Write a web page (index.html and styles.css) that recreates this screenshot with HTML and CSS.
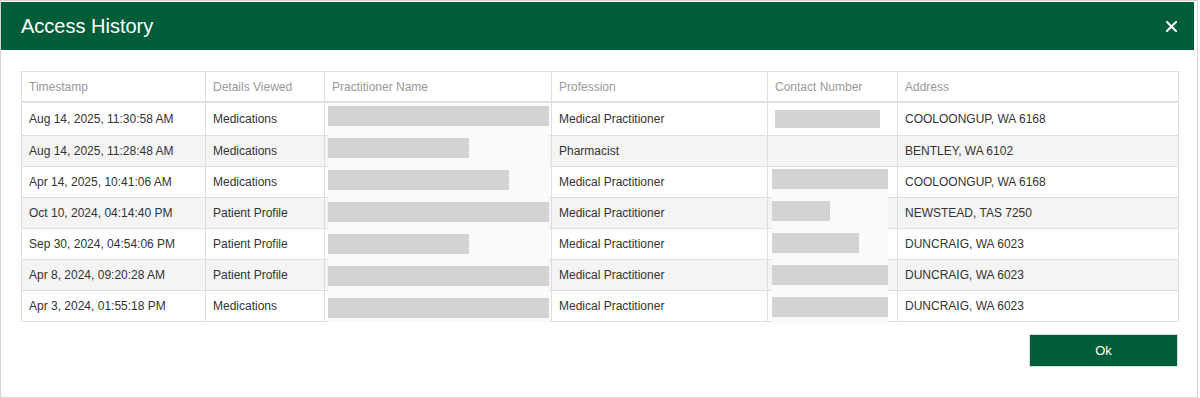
FILE: index.html
```html
<!DOCTYPE html>
<html lang="en">
<head>
    <meta charset="UTF-8">
    <meta name="viewport" content="width=device-width, initial-scale=1.0">
    <title>Access History</title>
    <link rel="stylesheet" href="styles.css">
</head>
<body>
    <div class="modal">
        <div class="modal-header">
            <h2>Access History</h2>
            <button class="close-btn" aria-label="Close">
                <svg width="11" height="11" viewBox="0 0 11 11">
                    <path d="M1 1 L10 10 M10 1 L1 10" stroke="#fff" stroke-width="2" stroke-linecap="square"/>
                </svg>
            </button>
        </div>

        <div class="modal-body">
            <div class="table-wrap">
                <table class="history">
                    <colgroup>
                        <col style="width:184px">
                        <col style="width:119px">
                        <col style="width:227px">
                        <col style="width:216px">
                        <col style="width:130px">
                        <col>
                    </colgroup>
                    <thead>
                        <tr>
                            <th>Timestamp</th>
                            <th>Details Viewed</th>
                            <th>Practitioner Name</th>
                            <th>Profession</th>
                            <th>Contact Number</th>
                            <th>Address</th>
                        </tr>
                    </thead>
                    <tbody>
                        <tr>
                            <td>Aug 14, 2025, 11:30:58 AM</td>
                            <td>Medications</td>
                            <td></td>
                            <td>Medical Practitioner</td>
                            <td><span class="masked"></span></td>
                            <td>COOLOONGUP, WA 6168</td>
                        </tr>
                        <tr>
                            <td>Aug 14, 2025, 11:28:48 AM</td>
                            <td>Medications</td>
                            <td></td>
                            <td>Pharmacist</td>
                            <td></td>
                            <td>BENTLEY, WA 6102</td>
                        </tr>
                        <tr>
                            <td>Apr 14, 2025, 10:41:06 AM</td>
                            <td>Medications</td>
                            <td></td>
                            <td>Medical Practitioner</td>
                            <td></td>
                            <td>COOLOONGUP, WA 6168</td>
                        </tr>
                        <tr>
                            <td>Oct 10, 2024, 04:14:40 PM</td>
                            <td>Patient Profile</td>
                            <td></td>
                            <td>Medical Practitioner</td>
                            <td></td>
                            <td>NEWSTEAD, TAS 7250</td>
                        </tr>
                        <tr>
                            <td>Sep 30, 2024, 04:54:06 PM</td>
                            <td>Patient Profile</td>
                            <td></td>
                            <td>Medical Practitioner</td>
                            <td></td>
                            <td>DUNCRAIG, WA 6023</td>
                        </tr>
                        <tr>
                            <td>Apr 8, 2024, 09:20:28 AM</td>
                            <td>Patient Profile</td>
                            <td></td>
                            <td>Medical Practitioner</td>
                            <td></td>
                            <td>DUNCRAIG, WA 6023</td>
                        </tr>
                        <tr>
                            <td>Apr 3, 2024, 01:55:18 PM</td>
                            <td>Medications</td>
                            <td></td>
                            <td>Medical Practitioner</td>
                            <td></td>
                            <td>DUNCRAIG, WA 6023</td>
                        </tr>
                    </tbody>
                </table>

                <!-- redacted columns -->
                <div class="redact redact-name">
                    <span class="bar" style="width:221px"></span>
                    <span class="bar" style="width:141px"></span>
                    <span class="bar" style="width:181px"></span>
                    <span class="bar" style="width:221px"></span>
                    <span class="bar" style="width:141px"></span>
                    <span class="bar" style="width:221px"></span>
                    <span class="bar" style="width:221px"></span>
                </div>
                <div class="redact redact-contact">
                    <span class="bar" style="width:116px"></span>
                    <span class="bar" style="width:58px"></span>
                    <span class="bar" style="width:87px"></span>
                    <span class="bar" style="width:116px"></span>
                    <span class="bar" style="width:116px"></span>
                </div>
            </div>

            <div class="modal-footer">
                <button class="ok-btn">Ok</button>
            </div>
        </div>
    </div>
</body>
</html>
```

FILE: styles.css
```css
* {
    box-sizing: border-box;
}
body {
    margin: 0;
    background-color: #fff;
    font-family: Arial, "Liberation Sans", sans-serif;
}
.modal {
    width: 1198px;
    height: 398px;
    border: 1px solid #d4d4d4;
    background-color: #fff;
}
.modal-header {
    display: flex;
    align-items: center;
    justify-content: space-between;
    height: 48px;
    margin: 1px 3px 0 0;
    padding: 0 17px 0 20px;
    background-color: #005c39;
}
.modal-header h2 {
    margin: 0;
    font-size: 20px;
    font-weight: normal;
    color: #fff;
}
.close-btn {
    display: flex;
    padding: 0;
    margin-top: 1px;
    background: none;
    border: none;
    cursor: pointer;
}
.modal-body {
    padding: 21px 18px 0 20px;
}
.table-wrap {
    position: relative;
}
.history {
    width: 1158px;
    border-collapse: collapse;
    table-layout: fixed;
    font-size: 12px;
    color: #333;
}
.history th,
.history td {
    border: 1px solid #dedede;
    padding: 7px 8px 7px 7px;
    line-height: 16px;
    text-align: left;
    white-space: nowrap;
    overflow: hidden;
}
.history th {
    font-weight: normal;
    color: #999;
    padding: 7px 8px 6px 7px;
    border-bottom: 2px solid #dedede;
}
.history tbody tr:nth-child(even) td {
    background-color: #f4f4f4;
}
.masked {
    display: inline-block;
    width: 105px;
    height: 18px;
    vertical-align: middle;
    background-color: #d3d3d3;
}
.redact {
    position: absolute;
    display: flex;
    flex-direction: column;
    gap: 12px;
    background-color: #fafafa;
}
.redact .bar {
    display: block;
    height: 20px;
    background-color: #d3d3d3;
}
.redact-name {
    left: 307px;
    top: 33px;
    width: 221px;
    height: 218px;
    padding-top: 2px;
}
.redact-contact {
    left: 751px;
    top: 98px;
    width: 116px;
    height: 155px;
}
.modal-footer {
    display: flex;
    justify-content: flex-end;
    padding-top: 12px;
}
.ok-btn {
    width: 149px;
    height: 33px;
    margin-right: 1px;
    background-color: #005c39;
    color: #fff;
    border: 1px solid #dcdcdc;
    font-family: Arial, "Liberation Sans", sans-serif;
    font-size: 13px;
    cursor: pointer;
}
```
